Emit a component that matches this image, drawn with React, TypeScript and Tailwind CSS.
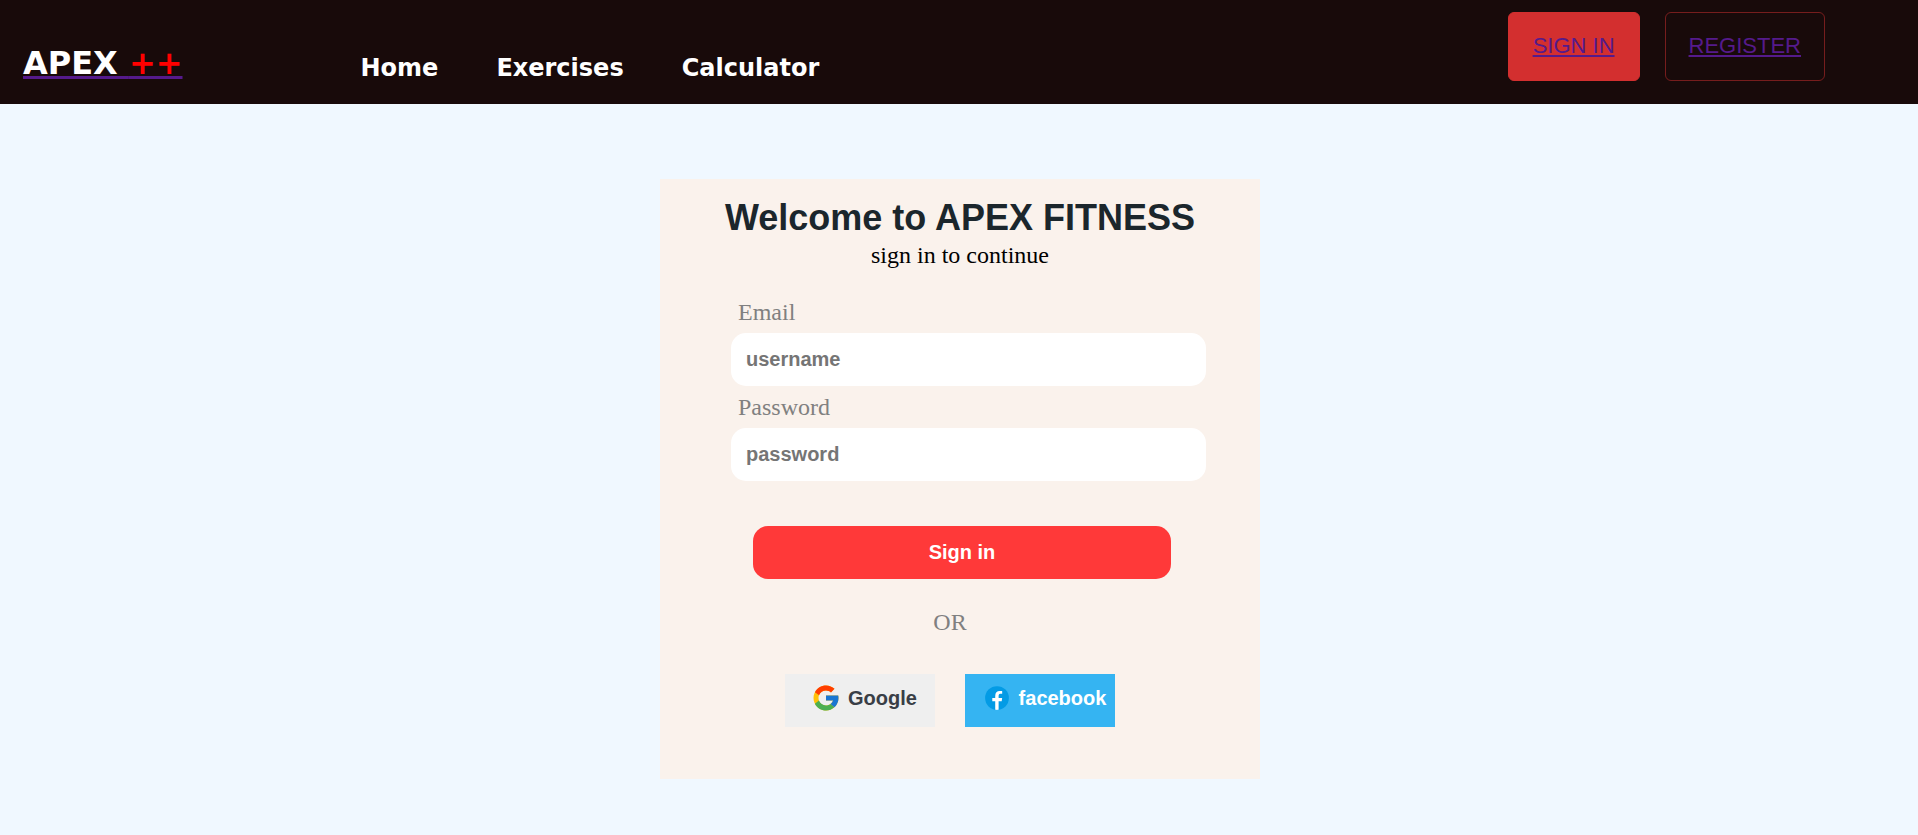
import { FcGoogle } from "react-icons/fc";

const navLinks = ["Home", "Exercises", "Calculator"];

function FacebookIcon() {
  return (
    <svg viewBox="0 0 48 48" className="size-[30px] shrink-0" aria-hidden="true">
      <circle cx="24" cy="24" r="19" fill="#039be5" />
      <path
        fill="#fff"
        d="M26.572,29.036h4.917l0.772-4.995h-5.69v-2.73c0-2.075,0.678-3.915,2.619-3.915h3.119v-4.359c-0.548-0.074-1.707-0.236-3.897-0.236c-4.573,0-7.254,2.415-7.254,7.917v3.323h-4.701v4.995h4.701v13.729C22.089,42.905,23.032,43,24,43c0.875,0,1.729-0.08,2.572-0.194V29.036z"
      />
    </svg>
  );
}

function Header() {
  return (
    <header className="flex items-end bg-[#180a0a] pt-3 pr-[93px] pb-5 pl-[23px] font-['DejaVu_Sans',sans-serif]">
      <a
        href="#home"
        className="text-[32px] leading-[42px] font-bold whitespace-nowrap text-white underline decoration-[#551a8b] decoration-3"
      >
        APEX <span className="text-[#ff0000]">++</span>
      </a>
      <nav className="ml-[178px] flex gap-[58px]">
        {navLinks.map((label) => (
          <a key={label} href={`#${label.toLowerCase()}`} className="text-2xl leading-8 font-bold text-white">
            {label}
          </a>
        ))}
      </nav>
      <div className="mb-[3px] ml-auto flex gap-[25px] font-['Liberation_Sans',Arial,sans-serif] text-[22px] leading-[30px] whitespace-nowrap text-[#551a8b]">
        <a
          href="#signin"
          className="rounded-md border border-[#d32f2f] bg-[#d32f2f] px-6 pt-[18px] pb-[19px] underline"
        >
          SIGN IN
        </a>
        <a
          href="#register"
          className="rounded-md border border-[#d32f2f]/50 px-[23px] pt-[18px] pb-[19px] underline"
        >
          REGISTER
        </a>
      </div>
    </header>
  );
}

type FieldProps = { id: string; label: string; type: string; placeholder: string };

function Field({ id, label, type, placeholder }: FieldProps) {
  return (
    <div className="flex flex-col gap-[7px]">
      <label htmlFor={id} className="pl-[7px] text-2xl leading-7 text-[#808080]">
        {label}
      </label>
      <input
        id={id}
        type={type}
        placeholder={placeholder}
        className="h-[53px] w-full rounded-[15px] bg-white px-[15px] font-['Liberation_Sans',Arial,sans-serif] text-xl font-bold text-[#1b262c] outline-none placeholder:text-[#757575]"
      />
    </div>
  );
}

export default function App() {
  return (
    <div className="min-h-screen bg-[#f0f8ff] pb-14 font-['Liberation_Serif','Times_New_Roman',serif]">
      <Header />
      <div className="flex justify-center pt-[75px] pl-0.5">
        <main className="w-full max-w-[600px] bg-[#faf2ec] pt-[17px] pb-[52px]">
          <h1 className="text-center font-['Liberation_Sans',Arial,sans-serif] text-4xl leading-[44px] font-bold text-[#1b262c]">
            Welcome to APEX FITNESS
          </h1>
          <p className="text-center text-2xl leading-[30px] text-black">sign in to continue</p>
          <form className="mt-7" onSubmit={(e) => e.preventDefault()}>
            <div className="flex flex-col gap-[7px] pr-[54px] pl-[71px]">
              <Field id="email" label="Email" type="text" placeholder="username" />
              <Field id="password" label="Password" type="password" placeholder="password" />
            </div>
            <div className="mt-[45px] pr-[89px] pl-[93px]">
              <button
                type="submit"
                className="h-[53px] w-full rounded-[15px] bg-[#ff3939] pb-0.5 font-['Liberation_Sans',Arial,sans-serif] text-xl font-bold text-white"
              >
                Sign in
              </button>
            </div>
            <div className="pr-5">
              <p className="mt-[29px] text-center text-2xl leading-7 text-[#808080]">OR</p>
              <div className="mt-[38px] flex justify-center gap-[30px] font-['Liberation_Sans',Arial,sans-serif] text-xl font-bold">
                <button
                  type="button"
                  className="flex h-[53px] w-[150px] items-center justify-center gap-[7px] bg-[#efefef] pb-1.5 pl-2 text-[#393e46]"
                >
                  <FcGoogle className="size-[30px] shrink-0" aria-hidden="true" />
                  Google
                </button>
                <button
                  type="button"
                  className="flex h-[53px] w-[150px] items-center justify-center gap-[7px] bg-[#35b4f2] pb-1.5 pl-2 text-white"
                >
                  <FacebookIcon />
                  facebook
                </button>
              </div>
            </div>
          </form>
        </main>
      </div>
    </div>
  );
}
